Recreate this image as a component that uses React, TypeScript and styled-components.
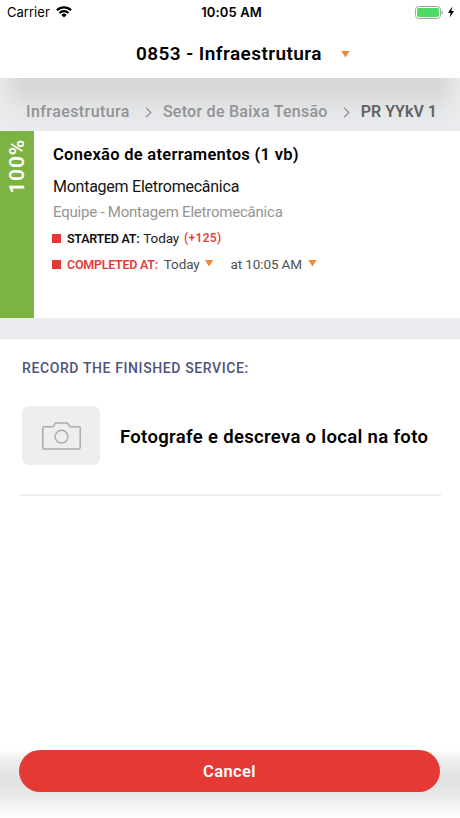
import React from 'react';
import styled, { createGlobalStyle } from 'styled-components';

const Global = createGlobalStyle`
  * { box-sizing: border-box; }
  body { margin: 0; background: #fff; font-family: Roboto, "Noto Sans", sans-serif; }
`;
const Screen = styled.div`
  width: 460px;
  height: 818px;
  display: flex;
  flex-direction: column;
  overflow: hidden;
  color: #000;
  background: #fff;
`;
const StatusBar = styled.div`
  height: 24px;
  padding: 0 6px 0 7px;
  display: grid;
  grid-template-columns: 1fr auto 1fr;
  align-items: center;
  font: 400 13px/24px Inter, sans-serif;
`;
const Carrier = styled.div`
  display: flex;
  align-items: center;
  gap: 6px;
  letter-spacing: 0.03px;
`;
const Clock = styled.div`
  padding-left: 2px;
  font-weight: 600;
  letter-spacing: 0.12px;
`;
const Power = styled.div`
  display: flex;
  justify-content: flex-end;
  align-items: center;
  gap: 5px;
`;
const Header = styled.header`
  height: 54px;
  flex: none;
  padding: 5px 109px 0 136px;
  display: flex;
  align-items: center;
  font-size: 19px;
  font-weight: 600;
  letter-spacing: 0.43px;
  line-height: 24px;
`;
const Caret = styled.span<{ $gap: number; $drop?: number }>`
  flex: none;
  width: 9px;
  height: 7px;
  margin-left: ${p => p.$gap}px;
  margin-top: ${p => p.$drop ?? 0}px;
  background: #ee8a35;
  clip-path: polygon(0 0, 100% 0, 50% 100%);
`;
const Breadcrumbs = styled.nav`
  height: 53px;
  flex: none;
  padding: 14px 0 0 26px;
  display: flex;
  align-items: center;
  white-space: nowrap;
  font-size: 16px;
  background:
    linear-gradient(90deg, rgba(235, 236, 238, 0.8), rgba(235, 236, 238, 0) 22px),
    linear-gradient(270deg, rgba(235, 236, 238, 0.8), rgba(235, 236, 238, 0) 22px),
    linear-gradient(#d5d6d8, #d9dadc 25%, #e5e6e8 65%, #ebecef);
`;
const Crumb = styled.span<{ $current?: boolean; $track: number }>`
  color: ${p => (p.$current ? '#626365' : '#929395')};
  font-weight: ${p => (p.$current ? 600 : 500)};
  letter-spacing: ${p => p.$track}px;
`;
const Chevron = styled.svg`
  width: 7px;
  height: 11px;
  flex: none;
  margin: 1px 11px 0 15px;
`;
const Card = styled.section`
  height: 187px;
  flex: none;
  display: flex;
`;
const Progress = styled.div`
  width: 34px;
  background: #7cb342;
  display: flex;
  justify-content: center;
  padding-top: 8px;
`;
const Percent = styled.span`
  writing-mode: vertical-rl;
  transform: rotate(180deg);
  align-self: flex-start;
  line-height: 34px;
  color: #fff;
  font-size: 21px;
  font-weight: 600;
  letter-spacing: 0.8px;
`;
const Details = styled.div`
  padding: 13px 0 0 19px;
  display: flex;
  flex-direction: column;
  white-space: nowrap;
`;
const TaskTitle = styled.h1`
  margin: 0;
  font-size: 16.5px;
  font-weight: 600;
  line-height: 22px;
  letter-spacing: 0.29px;
`;
const Service = styled.div`
  margin-top: 10px;
  font-size: 16px;
  line-height: 22px;
  letter-spacing: -0.25px;
  color: #151515;
`;
const Team = styled.div`
  margin-top: 3px;
  font-size: 15px;
  line-height: 22px;
  letter-spacing: -0.22px;
  color: #949494;
`;
const DateRow = styled.div`
  height: 26px;
  margin: 2px 0 0 -1px;
  display: flex;
  align-items: center;
  font-size: 13.5px;

  & + & { margin-top: 0; }
`;
const Bullet = styled.i`
  width: 9px;
  height: 9px;
  margin-right: 6px;
  background: #e53935;
`;
const Label = styled.span<{ $alert?: boolean }>`
  font-size: 12.5px;
  font-weight: 600;
  letter-spacing: -0.27px;
  color: ${p => (p.$alert ? '#df3c3c' : '#111')};
`;
const DateValue = styled.span<{ $gap: number; $muted?: boolean }>`
  margin: -1px 0 0 ${p => p.$gap}px;
  letter-spacing: -0.12px;
  color: ${p => (p.$muted ? '#505050' : '#222')};
`;
const Delay = styled.span`
  margin-left: 5px;
  font-size: 12px;
  font-weight: 600;
  letter-spacing: 0.33px;
  color: #df4444;
`;
const Divider = styled.div`
  height: 21px;
  flex: none;
  background: #ebecef;
  border-bottom: 1px solid #e4e5e8;
`;
const Record = styled.main`
  flex: 1;
  padding: 18px 19px 0 20px;
`;
const RecordHeading = styled.h2`
  margin: 0 0 27px 2px;
  font-size: 14px;
  font-weight: 500;
  line-height: 22px;
  letter-spacing: 0.61px;
  color: #4d5479;
`;
const PhotoTask = styled.div`
  height: 90px;
  padding-left: 2px;
  display: flex;
  align-items: flex-start;
  border-bottom: 2px solid #ededee;
`;
const PhotoButton = styled.button`
  width: 78px;
  height: 59px;
  padding: 0;
  display: grid;
  place-items: center;
  border: 0;
  border-radius: 7px;
  background: #eeeeef;
`;
const PhotoText = styled.span`
  margin-left: 20px;
  font-size: 18.5px;
  font-weight: 600;
  line-height: 62px;
  letter-spacing: 0.33px;
  white-space: nowrap;
`;
const Footer = styled.footer`
  height: 72px;
  flex: none;
  padding: 4px 20px 0 19px;
  background: linear-gradient(#fff 6%, #ededed 20%, #e1e1e1 48%, #e9e8e8 66%, #f4f4f4 84%, #fff);
`;
const CancelButton = styled.button`
  width: 100%;
  height: 42px;
  padding: 2px 0 0;
  border: 0;
  border-radius: 21px;
  background: #e53935;
  color: #fff;
  font: 600 16.5px/20px Roboto, sans-serif;
  letter-spacing: 0.4px;
`;

const Separator = () => (
  <Chevron viewBox="0 0 7 11" fill="none" stroke="#96979a" strokeWidth="1.3">
    <path d="M1 .8 5.8 5.5 1 10.2" />
  </Chevron>
);

export default function App() {
  return (
    <Screen>
      <Global />
      <StatusBar>
        <Carrier>
          Carrier
          <svg width="16" height="12" viewBox="0 0 16 12" fill="none" stroke="#000" strokeWidth="2.1">
            <path d="M.9 4.3a10.1 10.1 0 0 1 14.2 0M3.5 7a6.4 6.4 0 0 1 9 0" />
            <path d="M5.4 8.9a3.7 3.7 0 0 1 5.2 0L8 11.5Z" fill="#000" stroke="none" />
          </svg>
        </Carrier>
        <Clock>10:05 AM</Clock>
        <Power>
          <svg width="28" height="13" viewBox="0 0 28 13">
            <rect x=".5" y=".5" width="25" height="12" rx="3.2" fill="#fff" stroke="#a0a5a0" />
            <rect x="2" y="2" width="22" height="9" rx="1.8" fill="#4cd964" />
            <path d="M26.6 4.3q1.4.5 1.4 2.2t-1.4 2.2Z" fill="#a0a5a0" />
          </svg>
          <svg width="6" height="12" viewBox="0 0 6 12">
            <path d="M4.3.5 0 6.8h2.6L1.7 11.5 6 5H3.4Z" />
          </svg>
        </Power>
      </StatusBar>
      <Header>
        0853 - Infraestrutura
        <Caret $gap={19} $drop={1} />
      </Header>
      <Breadcrumbs>
        <Crumb $track={0.42}>Infraestrutura</Crumb>
        <Separator />
        <Crumb $track={0.27}>Setor de Baixa Tensão</Crumb>
        <Separator />
        <Crumb $current $track={0}>PR YYkV 1</Crumb>
      </Breadcrumbs>
      <Card>
        <Progress><Percent>100%</Percent></Progress>
        <Details>
          <TaskTitle>Conexão de aterramentos (1 vb)</TaskTitle>
          <Service>Montagem Eletromecânica</Service>
          <Team>Equipe - Montagem Eletromecânica</Team>
          <DateRow>
            <Bullet />
            <Label>STARTED AT:</Label>
            <DateValue $gap={4}>Today</DateValue>
            <Delay>(+125)</Delay>
          </DateRow>
          <DateRow>
            <Bullet />
            <Label $alert>COMPLETED AT:</Label>
            <DateValue $gap={6} $muted>Today</DateValue>
            <Caret $gap={5} $drop={-2} />
            <DateValue $gap={17} $muted>at 10:05 AM</DateValue>
            <Caret $gap={6} $drop={-2} />
          </DateRow>
        </Details>
      </Card>
      <Divider />
      <Record>
        <RecordHeading>RECORD THE FINISHED SERVICE:</RecordHeading>
        <PhotoTask>
          <PhotoButton aria-label="Add photo">
            <svg width="39" height="28" viewBox="0 0 39 28" fill="none" stroke="#aaabad" strokeWidth="1.5">
              <path d="M2.2 4.8h8.3c1.8 0 1.6-3.9 3.6-3.9h10.8c2 0 1.8 3.9 3.6 3.9h8.3q1.4 0 1.4 1.4v19.4q0 1.4-1.4 1.4H2.2q-1.4 0-1.4-1.4V6.2q0-1.4 1.4-1.4Z" />
              <circle cx="19.5" cy="14.7" r="6.4" />
            </svg>
          </PhotoButton>
          <PhotoText>Fotografe e descreva o local na foto</PhotoText>
        </PhotoTask>
      </Record>
      <Footer><CancelButton>Cancel</CancelButton></Footer>
    </Screen>
  );
}
